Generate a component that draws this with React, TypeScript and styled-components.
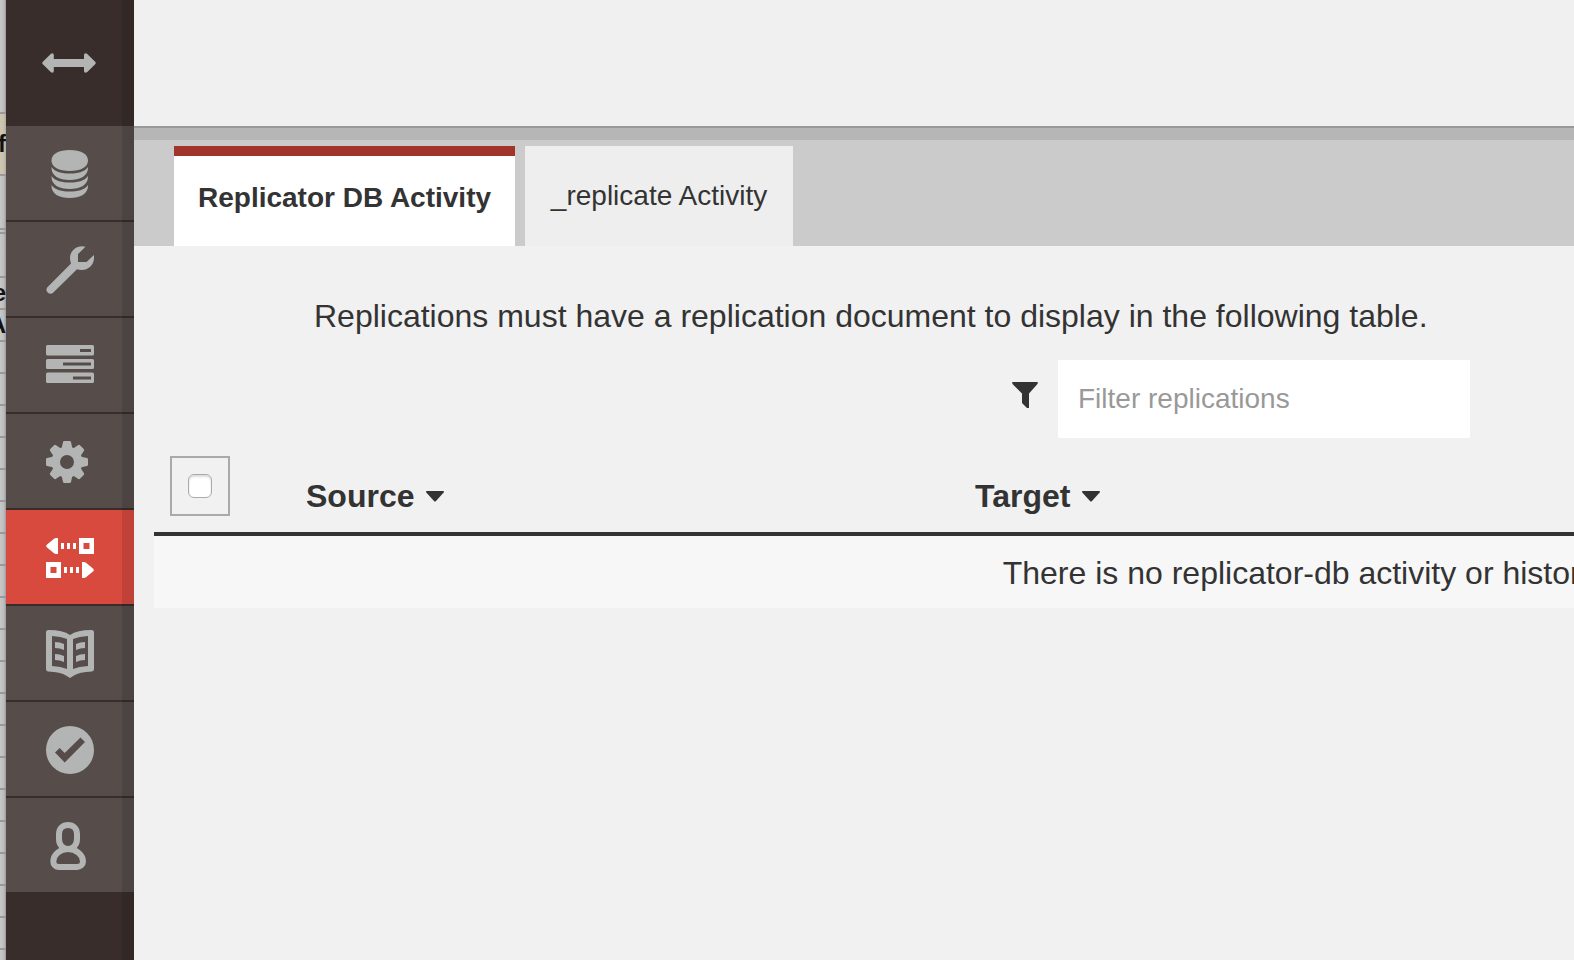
import React from 'react';
import styled, { createGlobalStyle } from 'styled-components';

const GlobalStyle = createGlobalStyle`
  *, *::before, *::after { box-sizing: border-box; }
  body {
    margin: 0;
    background: #f1f1f1;
    color: #333;
    font-family: "Liberation Sans", Helvetica, Arial, sans-serif;
    font-size: 32px;
    line-height: 40px;
  }
`;

const Shell = styled.div`
  display: flex;
  min-height: 100vh;
  overflow: hidden;
`;

const Backdrop = styled.aside`
  flex: 0 0 6px;
  display: flex;
  flex-direction: column;
  overflow: hidden;
  background: linear-gradient(to right, #c8c8c8, #bcbcbc 66%, #999);
`;

const BackdropRow = styled.div<{ $height: number; $tint?: string }>`
  flex: 0 0 ${(p) => p.$height}px;
  display: flex;
  align-items: center;
  justify-content: flex-end;
  overflow: hidden;
  border-bottom: 2px solid #999;
  background: ${(p) => p.$tint ?? 'transparent'};
  color: #111;
  font-size: 24px;
  font-weight: bold;
  line-height: 24px;
`;

const Sidebar = styled.nav`
  position: relative;
  flex: 0 0 128px;
  background: #392d2b;

  &::after {
    content: "";
    position: absolute;
    inset: 0 0 0 auto;
    width: 12px;
    background: rgba(0, 0, 0, 0.11);
    pointer-events: none;
  }
`;

const Toggle = styled.button`
  display: flex;
  align-items: center;
  width: 100%;
  height: 126px;
  padding: 0 0 0 36px;
  border: 0;
  background: none;
  color: #b2b5b4;
`;

const NavList = styled.ul`
  margin: 0;
  padding: 0;
  list-style: none;
`;

const NavItem = styled.li`
  & + & { border-top: 2px solid #392d2b; }
`;

const NavLink = styled.a<{ $active?: boolean }>`
  display: flex;
  align-items: center;
  height: 94px;
  padding: 2px 0 0 40px;
  background: ${(p) => (p.$active ? '#d84a3e' : '#564d4b')};
  color: ${(p) => (p.$active ? '#fff' : '#b2b5b4')};
`;

const Icon = styled.svg`
  display: block;
  fill: currentColor;
`;

const Main = styled.main`
  flex: 1 1 0;
  min-width: 0;
`;

const Header = styled.header`
  height: 128px;
  background: #f0f0f0;
  border-bottom: 2px solid #999;
`;

const TabBar = styled.div`
  display: flex;
  gap: 10px;
  height: 118px;
  padding: 6px 40px 0;
  border-top: 12px solid #b6b6b6;
  background: #cbcbcb;
`;

const Tab = styled.button<{ $active?: boolean }>`
  min-width: 268px;
  height: 100px;
  padding: 0 24px;
  border: 0;
  border-top: ${(p) => (p.$active ? '10px solid #a2352b' : '0')};
  background: ${(p) => (p.$active ? '#fff' : '#eee')};
  color: #333;
  font: ${(p) => (p.$active ? 'bold' : 'normal')} 28px/40px "Liberation Sans", Helvetica, Arial, sans-serif;
  white-space: nowrap;
  padding-bottom: ${(p) => (p.$active ? '6px' : '0')};
`;

const Content = styled.section`
  padding: 50px 0 0 20px;
  overflow: hidden;
`;

const Notice = styled.p`
  margin: 0;
  padding-left: 160px;
  white-space: nowrap;
`;

const FilterRow = styled.div`
  display: flex;
  justify-content: flex-end;
  align-items: center;
  gap: 20px;
  margin: 24px 104px 0 0;
`;

const FilterLabel = styled.label`
  padding-bottom: 8px;
`;

const FilterInput = styled.input`
  width: 412px;
  height: 78px;
  padding: 0 20px;
  border: 0;
  border-radius: 0;
  background: #fff;
  color: #333;
  font: 28px/40px "Liberation Sans", Helvetica, Arial, sans-serif;

  &::placeholder { color: #999; opacity: 1; }
`;

const Table = styled.table`
  width: 2442px;
  margin-top: 6px;
  border-collapse: separate;
  border-spacing: 0;
  table-layout: fixed;
`;

const HeadCell = styled.th<{ $width?: number }>`
  width: ${(p) => (p.$width ? `${p.$width}px` : 'auto')};
  height: 92px;
  padding: 0 0 16px;
  border-bottom: 4px solid #333;
  text-align: left;
  vertical-align: bottom;
`;

const SortButton = styled.button`
  display: flex;
  align-items: center;
  gap: 12px;
  padding: 0;
  border: 0;
  background: none;
  color: #333;
  font: bold 32px/40px "Liberation Sans", Helvetica, Arial, sans-serif;
`;

const SelectAll = styled.label`
  display: flex;
  align-items: center;
  justify-content: center;
  width: 60px;
  height: 60px;
  margin-left: 16px;
  border: 2px solid #aaa;
`;

const Checkbox = styled.input`
  appearance: none;
  width: 24px;
  height: 24px;
  margin: 0;
  border: 1px solid #aaa;
  border-radius: 6px;
  background: #fff;
  box-shadow: inset 0 2px 2px #ddd;
`;

const EmptyCell = styled.td`
  height: 72px;
  padding: 2px 0 0;
  background: #f7f7f7;
  text-align: center;
  white-space: nowrap;
`;

const ArrowsIcon = () => (
  <Icon width="54" height="20" viewBox="0 0 54 20" aria-hidden="true">
    <path d="M.6 9 9 .7Q11.500-.6 11.800 2V6H42V2Q42.300-.6 45 .7L53.400 9Q54 10 53.400 11L45 19.300Q42.300 20.600 42 18V14H11.800V18Q11.500 20.600 9 19.300L.6 11Q0 10 .6 9Z" />
  </Icon>
);

const DatabaseIcon = () => (
  <Icon width="48" height="48" viewBox="0 0 48 48" aria-hidden="true">
    <path d="M5.500 10.500C5.500 4 13 0 23.700 0S42 4 42 10.500 34.500 21 23.700 21 5.500 17 5.500 10.500Z" />
    <path d="M5.500 17C9 22 16 23.500 23.700 23.500S38.500 22 42 17C42.500 26 34 30 23.700 30S5 26 5.500 17Z" />
    <path d="M5.500 26C9 31 16 32.500 23.700 32.500S38.500 31 42 26C42.500 35 34 39 23.700 39S5 35 5.500 26Z" />
    <path d="M5.500 35C9 40 16 41.500 23.700 41.500S38.500 40 42 35C42.500 44 34 48 23.700 48S5 44 5.500 35Z" />
  </Icon>
);

const WrenchIcon = () => (
  <Icon width="48" height="48" viewBox="0 0 48 48" aria-hidden="true">
    <path d="M39.500.8C32-1.500 24 4 24 12Q24 15 25 17.500L1.200 41.500A4 4 0 0 0 6.800 47L31 23.200C39 26 48 21 48 12V9L40.500 16H32V8Z" />
  </Icon>
);

const ServersIcon = () => (
  <Icon width="48" height="42" viewBox="0 0 48 42" aria-hidden="true">
    <path fillRule="evenodd" d="M1.500 0H46.500Q48 0 48 1.500V9Q48 10.500 46.500 10.500H1.500Q0 10.500 0 9V1.500Q0 0 1.500 0ZM34 4V7H45V4Z" />
    <path fillRule="evenodd" d="M1.500 14H46.500Q48 14 48 15.500V22.500Q48 24 46.500 24H1.500Q0 24 0 22.500V15.500Q0 14 1.500 14ZM17 17.500V20.500H45V17.500Z" />
    <path fillRule="evenodd" d="M1.500 27.500H46.500Q48 27.500 48 29V36.500Q48 38 46.500 38H1.500Q0 38 0 36.500V29Q0 27.500 1.500 27.500ZM27 31.500V34.500H45V31.500Z" />
  </Icon>
);

const GEAR_ANGLES = [0, 45, 90, 135, 180, 225, 270, 315];

const GearIcon = () => (
  <Icon width="42" height="42" viewBox="-21 -21 42 42" aria-hidden="true">
    {GEAR_ANGLES.map((angle) => (
      <path key={angle} transform={`rotate(${angle})`} d="M-5.500-13-4-20Q-3.700-21-2.700-21H2.700Q3.700-21 4-20L5.500-13Z" />
    ))}
    <path fillRule="evenodd" d="M0-15.500A15.500 15.500 0 1 1 0 15.500 15.500 15.500 0 0 1 0-15.500ZM0-7A7 7 0 1 0 0 7 7 7 0 0 0 0-7Z" />
  </Icon>
);

const ReplicationIcon = () => (
  <Icon width="48" height="40" viewBox="0 0 48 40" aria-hidden="true">
    <path d="M.5 7 8 .8Q9 0 10 0H12V16H10Q9 16 8 15.200L.5 9Q0 8 .5 7ZM15 5h3v6h-3zM21 5h3v6h-3zM27 5h3v6h-3z" />
    <path fillRule="evenodd" d="M33 0H48V16H33ZM37.500 5V11H43.500V5Z" />
    <path fillRule="evenodd" d="M0 24H15V40H0ZM4.500 29V35H10.500V29Z" />
    <path d="M18 29h3v6h-3zM24 29h3v6h-3zM30 29h3v6h-3zM36 24H38Q39 24 40 24.800L47.500 31Q48 32 47.500 33L40 39.200Q39 40 38 40H36Z" />
  </Icon>
);

const BookIcon = () => (
  <Icon width="48" height="48" viewBox="0 0 48 48" aria-hidden="true">
    <path fillRule="evenodd" d="M2.500 0Q17 0 24 5 31 0 45.500 0 48 0 48 2.500V39Q48 41 46 41.500 33 42 28 45.500L24 48 20 45.500Q15 42 2 41.500 0 41 0 39V2.500Q0 0 2.500 0ZM6 6V36Q15 36.500 21 39V9Q15 6.500 6 6ZM42 6Q33 6.500 27 9V39Q33 36.500 42 36Z" />
    <path d="M9 12Q14 12 18 14V20Q14 18 9 18ZM9 24Q14 24 18 26V32Q14 30 9 30ZM39 12Q34 12 30 14V20Q34 18 39 18ZM39 24Q34 24 30 26V32Q34 30 39 30Z" />
  </Icon>
);

const CheckIcon = () => (
  <Icon width="48" height="48" viewBox="0 0 48 48" aria-hidden="true">
    <path fillRule="evenodd" d="M24 0A24 24 0 1 1 24 48 24 24 0 0 1 24 0ZM9 26.500 18.700 36.500 39 16 34.500 11.500 18.700 27 13.700 22Z" />
  </Icon>
);

const UserIcon = () => (
  <Icon width="48" height="48" viewBox="0 0 48 48" aria-hidden="true">
    <path fill="none" stroke="currentColor" strokeWidth="6" d="M22 3C17 3 13 6.500 13 12V17C13 23 17 27 22 27S31 23 31 17V12C31 6.500 27 3 22 3ZM22 27C14 27 7.300 33 7.300 39.500 7.300 43 10 45 13 45H31C34 45 37 43 37 39.500 37 33 30 27 22 27Z" />
  </Icon>
);

const FunnelIcon = () => (
  <Icon width="26" height="26" viewBox="0 0 26 26" role="img" aria-label="Filter replications">
    <path d="M.3 0H25.700Q26 1.500 25 2.500L17 11.500V26H15L10 21V11.500L1 2.500Q0 1.500 .3 0Z" />
  </Icon>
);

const CaretIcon = () => (
  <Icon width="18" height="11" viewBox="0 0 18 11" aria-hidden="true">
    <path d="M1 0H17Q18.500.2 17.700 1.500L10 10Q9 11 8 10L.3 1.500Q-.5.2 1 0Z" />
  </Icon>
);

const NAV = [
  { label: 'Databases', icon: <DatabaseIcon /> },
  { label: 'Setup', icon: <WrenchIcon /> },
  { label: 'Active Tasks', icon: <ServersIcon /> },
  { label: 'Configuration', icon: <GearIcon /> },
  { label: 'Replication', icon: <ReplicationIcon />, active: true },
  { label: 'Documentation', icon: <BookIcon /> },
  { label: 'Verify', icon: <CheckIcon /> },
  { label: 'Account', icon: <UserIcon /> },
];

const ROWS_BEHIND = Array.from({ length: 20 }, (_, i) => i);

export default function App() {
  return (
    <Shell>
      <GlobalStyle />
      <Backdrop aria-hidden="true">
        <BackdropRow $height={114} />
        <BackdropRow $height={62} $tint="rgba(214, 198, 150, 0.4)">f</BackdropRow>
        <BackdropRow $height={54} />
        <BackdropRow $height={4} />
        <BackdropRow $height={44} />
        <BackdropRow $height={32}>e</BackdropRow>
        <BackdropRow $height={32}>A</BackdropRow>
        {ROWS_BEHIND.map((row) => (
          <BackdropRow key={row} $height={32} />
        ))}
      </Backdrop>
      <Sidebar aria-label="Primary">
        <Toggle type="button" aria-label="Expand navigation">
          <ArrowsIcon />
        </Toggle>
        <NavList>
          {NAV.map((item) => (
            <NavItem key={item.label}>
              <NavLink href="#" $active={item.active} aria-label={item.label}>
                {item.icon}
              </NavLink>
            </NavItem>
          ))}
        </NavList>
      </Sidebar>
      <Main>
        <Header />
        <TabBar role="tablist">
          <Tab type="button" role="tab" aria-selected="true" $active>Replicator DB Activity</Tab>
          <Tab type="button" role="tab" aria-selected="false">_replicate Activity</Tab>
        </TabBar>
        <Content>
          <Notice>Replications must have a replication document to display in the following table.</Notice>
          <FilterRow>
            <FilterLabel htmlFor="filter"><FunnelIcon /></FilterLabel>
            <FilterInput id="filter" type="text" placeholder="Filter replications" />
          </FilterRow>
          <Table>
            <thead>
              <tr>
                <HeadCell $width={152}>
                  <SelectAll>
                    <Checkbox type="checkbox" aria-label="Select all replications" />
                  </SelectAll>
                </HeadCell>
                <HeadCell $width={669}><SortButton type="button">Source <CaretIcon /></SortButton></HeadCell>
                <HeadCell><SortButton type="button">Target <CaretIcon /></SortButton></HeadCell>
              </tr>
            </thead>
            <tbody>
              <tr>
                <EmptyCell colSpan={3}>There is no replicator-db activity or history to display.</EmptyCell>
              </tr>
            </tbody>
          </Table>
        </Content>
      </Main>
    </Shell>
  );
}
